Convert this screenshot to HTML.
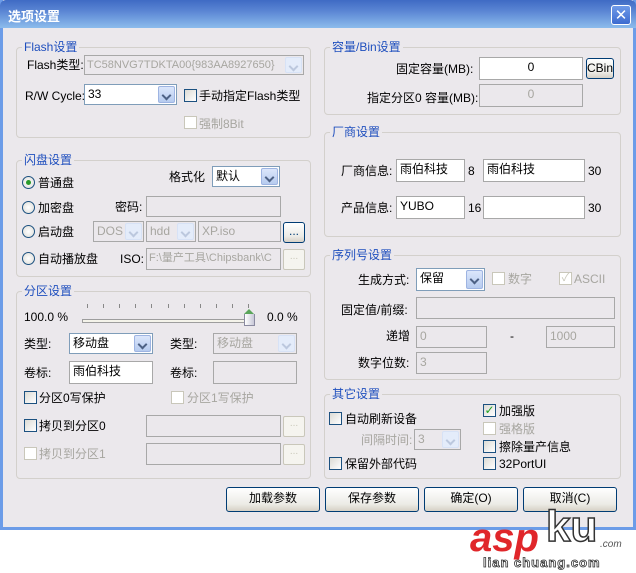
<!DOCTYPE html>
<html><head><meta charset="utf-8"><style>
*{box-sizing:border-box;margin:0;padding:0}
body{width:636px;height:573px;background:#fff;position:relative;overflow:hidden;font:12px "Liberation Sans","Noto Sans CJK SC",sans-serif;color:#000}
.a{position:absolute;white-space:nowrap;line-height:14px}
.win{position:absolute;left:0;top:0;width:636px;height:530px;background:#ebe8ec;border:3px solid #6c9ce8;border-top:none}
.title{position:absolute;left:0;top:0;width:636px;height:28px;background:linear-gradient(#3f6bc4,#5b86d4 40%,#8cbcec);border-radius:6px 6px 0 0}
.title span{position:absolute;left:8px;top:6px;color:#fff;font-weight:bold;font-size:13px}
.close{position:absolute;left:611px;top:5px;width:20px;height:20px;border:1px solid #fff;border-radius:3px;background:linear-gradient(#6f9ae8,#3d6bd0);color:#fff;font:bold 15px/18px "DejaVu Sans",sans-serif;text-align:center}
.g{position:absolute;border:1px solid #d3d0cc;border-radius:4px}
.gl{position:absolute;background:#ebe8ec;color:#1f4fbe;padding:0 2px;line-height:14px;white-space:nowrap}
.f{position:absolute;background:#fff;border:1px solid #7f9db9;padding:2px 3px;line-height:15px;white-space:nowrap;overflow:hidden}
.d{background:#ebe8ec;border-color:#a8a8a8;color:#a7a6a0}
.w{border-color:#a8a8a8}
.dd{position:absolute;top:1px;right:1px;bottom:1px;width:17px;background:linear-gradient(#dbe6fb,#b6cbef);border:1px solid #9eb4e2;border-radius:2px}
.dd:after{content:"";position:absolute;left:4px;top:5px;width:5px;height:5px;border-right:2px solid #4d6185;border-bottom:2px solid #4d6185;transform:rotate(45deg)}
.d .dd{background:#e4ecfa;border-color:#d7e2f6}
.d .dd:after{border-color:#bcc8de}
.cb{position:absolute;width:13px;height:13px;border:1px solid #1c5180;background:linear-gradient(135deg,#dcdbd5,#fff)}
.cb.x{border-color:#c9c7ba;background:#fff}
.rb{position:absolute;width:13px;height:13px;border:1px solid #1c5180;border-radius:50%;background:radial-gradient(#fff,#dcdbd5)}
.gr{color:#a7a6a0}
.btn{position:absolute;border:1px solid #003c74;border-radius:3px;background:linear-gradient(#fff,#ecebe6 70%,#d6d0c5);text-align:center;line-height:21px}
.sb{position:absolute;border:1px solid #c9c7ba;border-radius:2px;background:#f5f4ef;color:#c9c7ba;text-align:center;font-size:10px;line-height:14px}
.tk{position:absolute;top:304px;width:1px;height:4px;background:#888}
</style></head><body>
<div class="win"></div>
<div class="title"><span>选项设置</span><div class="close">✕</div></div>

<div class="g" style="left:16px;top:47px;width:295px;height:91px"></div>
<div class="gl" style="left:22px;top:40px">Flash设置</div>
<div class="a" style="left:27px;top:58px">Flash类型:</div>
<div class="f d" style="left:84px;top:55px;width:220px;height:20px;font-size:11px;padding-left:2px">TC58NVG7TDKTA00{983AA8927650}<div class="dd"></div></div>
<div class="a" style="left:25px;top:89px">R/W Cycle:</div>
<div class="f" style="left:84px;top:84px;width:93px;height:21px">33<div class="dd"></div></div>
<div class="cb" style="left:184px;top:89px"></div><div class="a" style="left:199px;top:89px">手动指定Flash类型</div>
<div class="cb x" style="left:184px;top:116px"></div><div class="a gr" style="left:199px;top:117px">强制8Bit</div>

<div class="g" style="left:16px;top:160px;width:295px;height:117px"></div>
<div class="gl" style="left:22px;top:153px">闪盘设置</div>
<div class="rb" style="left:22px;top:176px"></div><div style="position:absolute;left:26px;top:180px;width:5px;height:5px;border-radius:50%;background:#2a9a2a"></div>
<div class="a" style="left:38px;top:176px">普通盘</div>
<div class="a" style="left:169px;top:170px">格式化</div>
<div class="f" style="left:212px;top:166px;width:68px;height:21px">默认<div class="dd"></div></div>
<div class="rb" style="left:22px;top:201px"></div><div class="a" style="left:38px;top:201px">加密盘</div>
<div class="a" style="left:115px;top:200px">密码:</div>
<div class="f d" style="left:146px;top:196px;width:135px;height:21px"></div>
<div class="rb" style="left:22px;top:225px"></div><div class="a" style="left:38px;top:225px">启动盘</div>
<div class="f d" style="left:93px;top:221px;width:51px;height:21px">DOS<div class="dd"></div></div>
<div class="f d" style="left:146px;top:221px;width:50px;height:21px">hdd<div class="dd"></div></div>
<div class="f d" style="left:198px;top:221px;width:83px;height:21px">XP.iso</div>
<div class="btn" style="left:283px;top:222px;width:22px;height:21px;line-height:17px;color:#003c74">...</div>
<div class="rb" style="left:22px;top:252px"></div><div class="a" style="left:38px;top:252px">自动播放盘</div>
<div class="a" style="left:120px;top:252px">ISO:</div>
<div class="f d" style="left:146px;top:248px;width:135px;height:22px;font-size:11px;padding-left:2px">F:\量产工具\Chipsbank\C</div>
<div class="sb" style="left:283px;top:249px;width:22px;height:21px">...</div>

<div class="g" style="left:16px;top:291px;width:295px;height:188px"></div>
<div class="gl" style="left:22px;top:284px">分区设置</div>
<div class="a" style="left:24px;top:310px">100.0 %</div>
<div class="tk" style="left:87px"></div><div class="tk" style="left:103px"></div><div class="tk" style="left:119px"></div><div class="tk" style="left:135px"></div><div class="tk" style="left:151px"></div><div class="tk" style="left:168px"></div><div class="tk" style="left:184px"></div><div class="tk" style="left:200px"></div><div class="tk" style="left:216px"></div><div class="tk" style="left:232px"></div><div class="tk" style="left:248px"></div>
<div style="position:absolute;left:82px;top:319px;width:170px;height:4px;border:1px solid #9d9d9d;background:#f4f3ea"></div>
<div style="position:absolute;left:244px;top:314px;width:11px;height:12px;background:linear-gradient(90deg,#fff,#c8c8d8);border:1px solid #8a8aa0;border-top:none"></div>
<div style="position:absolute;left:244px;top:309px;width:0;height:0;border-left:5.5px solid transparent;border-right:5.5px solid transparent;border-bottom:5px solid #5ba55b"></div>
<div class="a" style="left:267px;top:310px">0.0 %</div>
<div class="a" style="left:24px;top:337px">类型:</div>
<div class="f" style="left:69px;top:333px;width:84px;height:21px">移动盘<div class="dd"></div></div>
<div class="a" style="left:170px;top:337px">类型:</div>
<div class="f d" style="left:213px;top:333px;width:84px;height:21px">移动盘<div class="dd"></div></div>
<div class="a" style="left:24px;top:366px">卷标:</div>
<div class="f w" style="left:69px;top:361px;width:84px;height:23px">雨伯科技</div>
<div class="a" style="left:170px;top:366px">卷标:</div>
<div class="f d" style="left:213px;top:361px;width:84px;height:23px"></div>
<div class="cb" style="left:24px;top:391px"></div><div class="a" style="left:39px;top:391px">分区0写保护</div>
<div class="cb x" style="left:171px;top:391px"></div><div class="a gr" style="left:187px;top:391px">分区1写保护</div>
<div class="cb" style="left:24px;top:419px"></div><div class="a" style="left:39px;top:419px">拷贝到分区0</div>
<div class="f d" style="left:146px;top:415px;width:135px;height:22px"></div>
<div class="sb" style="left:283px;top:416px;width:22px;height:21px">...</div>
<div class="cb x" style="left:24px;top:447px"></div><div class="a gr" style="left:39px;top:447px">拷贝到分区1</div>
<div class="f d" style="left:146px;top:443px;width:135px;height:22px"></div>
<div class="sb" style="left:283px;top:444px;width:22px;height:21px">...</div>

<div class="g" style="left:324px;top:47px;width:297px;height:68px"></div>
<div class="gl" style="left:330px;top:40px">容量/Bin设置</div>
<div class="a" style="left:396px;top:62px">固定容量(MB):</div>
<div class="f w" style="left:479px;top:57px;width:104px;height:23px;text-align:center">0</div>
<div class="btn" style="left:586px;top:58px;width:28px;height:21px;line-height:19px">CBin</div>
<div class="a" style="left:367px;top:91px">指定分区0 容量(MB):</div>
<div class="f d" style="left:479px;top:84px;width:104px;height:23px;text-align:center">0</div>

<div class="g" style="left:324px;top:132px;width:297px;height:105px"></div>
<div class="gl" style="left:330px;top:125px">厂商设置</div>
<div class="a" style="left:341px;top:164px">厂商信息:</div>
<div class="f w" style="left:396px;top:159px;width:69px;height:23px">雨伯科技</div>
<div class="a" style="left:468px;top:164px">8</div>
<div class="f w" style="left:483px;top:159px;width:102px;height:23px">雨伯科技</div>
<div class="a" style="left:588px;top:164px">30</div>
<div class="a" style="left:341px;top:201px">产品信息:</div>
<div class="f w" style="left:396px;top:196px;width:69px;height:23px">YUBO</div>
<div class="a" style="left:468px;top:201px">16</div>
<div class="f w" style="left:483px;top:196px;width:102px;height:23px"></div>
<div class="a" style="left:588px;top:201px">30</div>

<div class="g" style="left:324px;top:255px;width:297px;height:125px"></div>
<div class="gl" style="left:330px;top:248px">序列号设置</div>
<div class="a" style="left:358px;top:273px">生成方式:</div>
<div class="f" style="left:416px;top:268px;width:69px;height:23px">保留<div class="dd"></div></div>
<div class="cb x" style="left:492px;top:272px"></div><div class="a gr" style="left:508px;top:272px">数字</div>
<div class="cb x" style="left:559px;top:272px;color:#c9c7ba;font-size:11px;line-height:11px;text-align:center">✓</div><div class="a gr" style="left:574px;top:272px">ASCII</div>
<div class="a" style="left:341px;top:303px">固定值/前缀:</div>
<div class="f d" style="left:416px;top:297px;width:199px;height:22px"></div>
<div class="a" style="left:386px;top:329px">递增</div>
<div class="f d" style="left:416px;top:326px;width:71px;height:22px">0</div>
<div class="a" style="left:510px;top:329px">-</div>
<div class="f d" style="left:546px;top:326px;width:69px;height:22px">1000</div>
<div class="a" style="left:358px;top:356px">数字位数:</div>
<div class="f d" style="left:416px;top:352px;width:71px;height:22px">3</div>

<div class="g" style="left:324px;top:394px;width:297px;height:85px"></div>
<div class="gl" style="left:330px;top:387px">其它设置</div>
<div class="cb" style="left:329px;top:412px"></div><div class="a" style="left:345px;top:412px">自动刷新设备</div>
<div class="a gr" style="left:361px;top:433px">间隔时间:</div>
<div class="f d" style="left:414px;top:429px;width:47px;height:21px">3<div class="dd"></div></div>
<div class="cb" style="left:329px;top:457px"></div><div class="a" style="left:345px;top:457px">保留外部代码</div>
<div class="cb" style="left:483px;top:404px;color:#21a121;font:bold 12px/11px 'DejaVu Sans';text-align:center">✓</div><div class="a" style="left:499px;top:404px">加强版</div>
<div class="cb x" style="left:483px;top:422px"></div><div class="a gr" style="left:499px;top:422px">强格版</div>
<div class="cb" style="left:483px;top:440px"></div><div class="a" style="left:499px;top:440px">擦除量产信息</div>
<div class="cb" style="left:483px;top:457px"></div><div class="a" style="left:499px;top:457px">32PortUI</div>

<div class="btn" style="left:226px;top:487px;width:94px;height:25px">加载参数</div>
<div class="btn" style="left:325px;top:487px;width:94px;height:25px">保存参数</div>
<div class="btn" style="left:424px;top:487px;width:94px;height:25px">确定(O)</div>
<div class="btn" style="left:523px;top:487px;width:94px;height:25px">取消(C)</div>

<div class="a" style="left:470px;top:518px;font:italic bold 40px/40px 'Liberation Sans',sans-serif;color:#e0262a">asp</div>
<div class="a" style="left:546px;top:505px;font:bold 44px/44px 'Liberation Sans',sans-serif;color:#fff;-webkit-text-stroke:1.5px #333">ku</div>
<div class="a" style="left:600px;top:540px;font:italic 10px/10px 'Liberation Sans',sans-serif;color:#555">.com</div>
<div class="a" style="left:483px;top:556px;font:bold 13px/14px 'Liberation Sans',sans-serif;color:#fff;-webkit-text-stroke:0.8px #333;letter-spacing:1px">lian chuang.com</div>
</body></html>
